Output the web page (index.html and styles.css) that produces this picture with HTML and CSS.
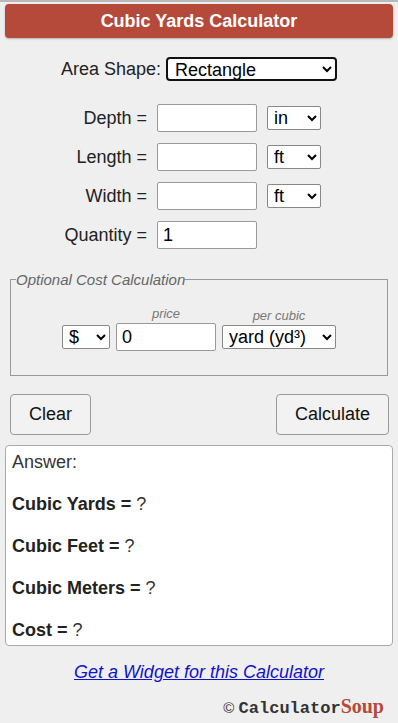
FILE: index.html
```html
<!DOCTYPE html>
<html>
<head>
	<title>Cubic Yards Calculator</title>
	<link rel="stylesheet" href="styles.css">
</head>
<body>
	<div class="topline"></div>
	<div class="calc">
		<h1 class="title">Cubic Yards Calculator</h1>

		<div class="shape">
			<label>Area Shape:</label>
			<select class="shape-select">
				<option>Rectangle</option>
			</select>
		</div>

		<div class="fields">
			<label>Depth =</label>
			<input type="text" class="num">
			<select class="unit"><option>in</option></select>

			<label>Length =</label>
			<input type="text" class="num">
			<select class="unit"><option>ft</option></select>

			<label>Width =</label>
			<input type="text" class="num">
			<select class="unit"><option>ft</option></select>

			<label>Quantity =</label>
			<input type="text" class="num" value="1">
		</div>

		<fieldset class="cost">
			<legend>Optional Cost Calculation</legend>
			<div class="cost-row">
				<div class="cost-col">
					<span class="hint">&nbsp;</span>
					<select class="currency"><option>$</option></select>
				</div>
				<div class="cost-col">
					<span class="hint">price</span>
					<input type="text" class="num" value="0">
				</div>
				<div class="cost-col">
					<span class="hint">per cubic</span>
					<select class="per"><option>yard (yd&sup3;)</option></select>
				</div>
			</div>
		</fieldset>

		<div class="buttons">
			<button class="btn clear">Clear</button>
			<button class="btn">Calculate</button>
		</div>

		<div class="answer">
			<div>Answer:</div>
			<p><b>Cubic Yards =</b> ?</p>
			<p><b>Cubic Feet =</b> ?</p>
			<p><b>Cubic Meters =</b> ?</p>
			<p><b>Cost =</b> ?</p>
		</div>

		<div class="widget"><a href="#">Get a Widget for this Calculator</a></div>

		<div class="brand">&copy; <span class="calc-word">Calculator</span><span class="soup">Soup</span></div>
	</div>
</body>
</html>
```

FILE: styles.css
```css
body {
	margin: 0;
	background: #efefef;
	font-family: "Liberation Sans", Arial, sans-serif;
	font-size: 18px;
	color: #222;
}
.topline {
	height: 2px;
	background: #b9b9b9;
}
.calc {
	padding: 2px 5px 0;
}
.title {
	margin: 0;
	height: 34px;
	line-height: 34px;
	background: #b54a3b;
	color: #fff;
	text-align: center;
	font-size: 18px;
	font-weight: bold;
	border-radius: 4px;
	box-shadow: 0 1px 2px rgba(0,0,0,.25);
}
.shape {
	display: flex;
	justify-content: center;
	align-items: center;
	gap: 5px;
	margin-top: 19px;
}
select, input, button {
	font-family: "Liberation Sans", Arial, sans-serif;
	font-size: 18px;
	color: #000;
}
.shape-select {
	width: 171px;
	height: 24px;
	border: 2px solid #111;
	border-radius: 4px;
	background: #fff;
	padding: 0 3px;
}
.fields {
	display: grid;
	grid-template-columns: 142px 100px 54px;
	column-gap: 10px;
	row-gap: 11px;
	align-items: center;
	margin-top: 23px;
}
.fields label {
	text-align: right;
}
.num {
	box-sizing: border-box;
	width: 100px;
	height: 28px;
	border: 1px solid #999;
	border-radius: 2px;
	background: #fff;
	padding: 0 5px;
}
.unit, .currency, .per {
	box-sizing: border-box;
	height: 24px;
	border: 1px solid #888;
	border-radius: 2px;
	background: #fff;
	padding: 0 2px;
}
.unit {
	width: 54px;
}
.currency, .per {
	margin-bottom: 2px;
}
.currency {
	width: 48px;
}
.per {
	width: 114px;
}
.cost {
	margin: 22px 5px 0;
	border: 1px solid #999;
	padding: 0 0 24px;
}
.cost legend {
	font-style: italic;
	color: #666;
	font-size: 15px;
	padding: 0;
	margin-left: 5px;
}
.cost-row {
	display: flex;
	justify-content: center;
	align-items: flex-end;
	gap: 6px;
	margin-top: 18px;
}
.cost-col {
	display: flex;
	flex-direction: column;
	align-items: center;
}
.hint {
	font-style: italic;
	color: #777;
	font-size: 13px;
	margin-bottom: 2px;
}
.buttons {
	display: flex;
	justify-content: space-between;
	margin: 18px 4px 0 5px;
}
.btn {
	height: 41px;
	padding: 0 18px;
	background: #f2f2f2;
	border: 1px solid #999;
	border-radius: 4px;
	color: #111;
}
.answer {
	margin-top: 10px;
	background: #fff;
	border: 1px solid #aaa;
	border-radius: 4px;
	padding: 6px 6px 4px;
	height: 189px;
	color: #333;
}
.answer p {
	margin: 21px 0 0;
	line-height: 21px;
}
.answer b {
	color: #222;
}
.widget {
	text-align: center;
	margin-top: 16px;
	font-style: italic;
}
.widget a {
	color: #1212cc;
}
.brand {
	text-align: right;
	margin: 12px 9px 0 0;
	font-size: 15px;
	color: #333;
}
.calc-word {
	font-family: "Liberation Mono", "Courier New", monospace;
	font-weight: bold;
	font-size: 17px;
}
.soup {
	font-family: "Liberation Serif", "Times New Roman", serif;
	font-weight: bold;
	font-size: 20px;
	color: #b54a3b;
}
```
